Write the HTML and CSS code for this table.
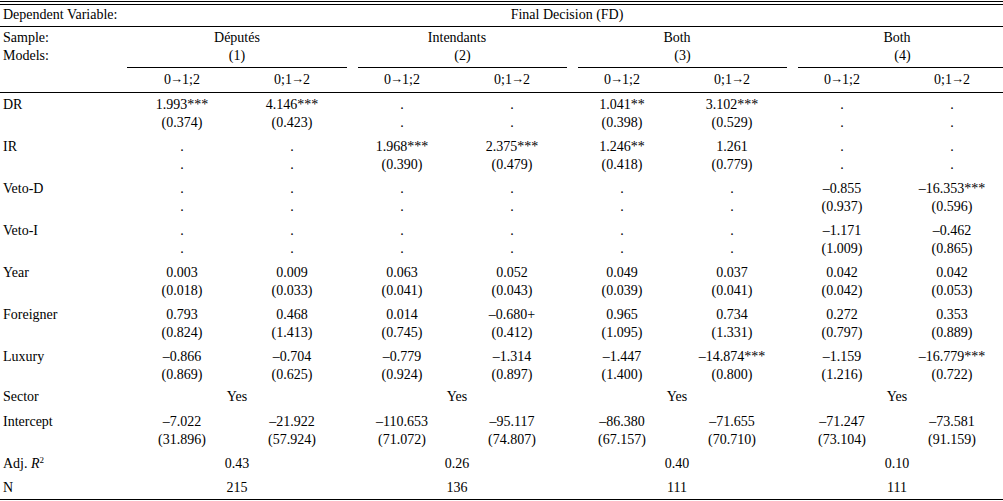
FILE: index.html
```html
<!DOCTYPE html>
<html>
<head>
<meta charset="utf-8">
<link rel="stylesheet" href="styles.css">
</head>
<body>
<div class="wrap">
<table class="reg">
<colgroup>
<col class="c-label"><col class="c"><col class="c"><col class="c"><col class="c"><col class="c"><col class="c"><col class="c"><col class="c">
</colgroup>
<tbody>
<tr class="r-dep">
<td class="lab">Dependent Variable:</td>
<td colspan="8">Final Decision (FD)</td>
</tr>
<tr class="r-sample">
<td class="lab">Sample:</td>
<td colspan="2">Députés</td>
<td colspan="2">Intendants</td>
<td colspan="2">Both</td>
<td colspan="2">Both</td>
</tr>
<tr class="r-models">
<td class="lab">Models:</td>
<td colspan="2"><div class="cmid first">(1)</div></td>
<td colspan="2"><div class="cmid">(2)</div></td>
<td colspan="2"><div class="cmid">(3)</div></td>
<td colspan="2"><div class="cmid">(4)</div></td>
</tr>
<tr class="r-arrows">
<td class="lab"></td>
<td>0<span class="arr">→</span>1;2</td><td>0;1<span class="arr">→</span>2</td>
<td>0<span class="arr">→</span>1;2</td><td>0;1<span class="arr">→</span>2</td>
<td>0<span class="arr">→</span>1;2</td><td>0;1<span class="arr">→</span>2</td>
<td>0<span class="arr">→</span>1;2</td><td>0;1<span class="arr">→</span>2</td>
</tr>
<tr class="r-coef">
<td class="lab">DR</td>
<td>1.993***<br>(0.374)</td><td>4.146***<br>(0.423)</td>
<td>.<br>.</td><td>.<br>.</td>
<td>1.041**<br>(0.398)</td><td>3.102***<br>(0.529)</td>
<td>.<br>.</td><td>.<br>.</td>
</tr>
<tr class="r-coef">
<td class="lab">IR</td>
<td>.<br>.</td><td>.<br>.</td>
<td>1.968***<br>(0.390)</td><td>2.375***<br>(0.479)</td>
<td>1.246**<br>(0.418)</td><td>1.261<br>(0.779)</td>
<td>.<br>.</td><td>.<br>.</td>
</tr>
<tr class="r-coef">
<td class="lab">Veto-D</td>
<td>.<br>.</td><td>.<br>.</td>
<td>.<br>.</td><td>.<br>.</td>
<td>.<br>.</td><td>.<br>.</td>
<td>–0.855<br>(0.937)</td><td>–16.353***<br>(0.596)</td>
</tr>
<tr class="r-coef">
<td class="lab">Veto-I</td>
<td>.<br>.</td><td>.<br>.</td>
<td>.<br>.</td><td>.<br>.</td>
<td>.<br>.</td><td>.<br>.</td>
<td>–1.171<br>(1.009)</td><td>–0.462<br>(0.865)</td>
</tr>
<tr class="r-coef">
<td class="lab">Year</td>
<td>0.003<br>(0.018)</td><td>0.009<br>(0.033)</td>
<td>0.063<br>(0.041)</td><td>0.052<br>(0.043)</td>
<td>0.049<br>(0.039)</td><td>0.037<br>(0.041)</td>
<td>0.042<br>(0.042)</td><td>0.042<br>(0.053)</td>
</tr>
<tr class="r-coef">
<td class="lab">Foreigner</td>
<td>0.793<br>(0.824)</td><td>0.468<br>(1.413)</td>
<td>0.014<br>(0.745)</td><td>–0.680+<br>(0.412)</td>
<td>0.965<br>(1.095)</td><td>0.734<br>(1.331)</td>
<td>0.272<br>(0.797)</td><td>0.353<br>(0.889)</td>
</tr>
<tr class="r-coef">
<td class="lab">Luxury</td>
<td>–0.866<br>(0.869)</td><td>–0.704<br>(0.625)</td>
<td>–0.779<br>(0.924)</td><td>–1.314<br>(0.897)</td>
<td>–1.447<br>(1.400)</td><td>–14.874***<br>(0.800)</td>
<td>–1.159<br>(1.216)</td><td>–16.779***<br>(0.722)</td>
</tr>
<tr class="r-sector">
<td class="lab">Sector</td>
<td colspan="2">Yes</td><td colspan="2">Yes</td><td colspan="2">Yes</td><td colspan="2">Yes</td>
</tr>
<tr class="r-coef r-int">
<td class="lab">Intercept</td>
<td>–7.022<br>(31.896)</td><td>–21.922<br>(57.924)</td>
<td>–110.653<br>(71.072)</td><td>–95.117<br>(74.807)</td>
<td>–86.380<br>(67.157)</td><td>–71.655<br>(70.710)</td>
<td>–71.247<br>(73.104)</td><td>–73.581<br>(91.159)</td>
</tr>
<tr class="r-stat">
<td class="lab">Adj. <i>R</i><sup>2</sup></td>
<td colspan="2">0.43</td><td colspan="2">0.26</td><td colspan="2">0.40</td><td colspan="2">0.10</td>
</tr>
<tr class="r-stat r-last">
<td class="lab">N</td>
<td colspan="2">215</td><td colspan="2">136</td><td colspan="2">111</td><td colspan="2">111</td>
</tr>
</tbody>
</table>
</div>
</body>
</html>
```

FILE: styles.css
```css
html, body {
  margin: 0;
  padding: 0;
  background: #fff;
}
body {
  font-family: "Liberation Serif", "Times New Roman", serif;
  font-size: 14px;
  line-height: 18px;
  color: #000;
  width: 1003px;
  height: 501px;
  overflow: hidden;
}
.wrap {
  width: 1003px;
  overflow: hidden;
  margin-top: 1px;
  border-top: 1px solid #000;
  padding-top: 2px;
}
.reg {
  width: 1007px;
  table-layout: fixed;
  border-collapse: collapse;
  border-spacing: 0;
  border-top: 1px solid #000;
}
.c-label { width: 127px; }
.c { width: 110px; }
.reg td {
  padding: 0;
  text-align: center;
  vertical-align: top;
  white-space: nowrap;
}
.reg td.lab {
  text-align: left;
  padding-left: 3px;
}
.r-dep td {
  padding-top: 1px;
  padding-bottom: 2px;
  border-bottom: 1px solid #000;
}
.r-sample td {
  padding-top: 2px;
}
.r-models td {
  padding-bottom: 0;
}
.cmid {
  margin-left: 11px;
  padding-bottom: 2px;
  border-bottom: 1px solid #000;
}
.cmid.first {
  margin-left: 0;
}
.r-arrows td {
  padding-top: 3px;
  padding-bottom: 3px;
  border-bottom: 1px solid #000;
}
.arr {
  display: inline-block;
  margin: 0 -1px;
  font-size: 13px;
  line-height: 18px;
  vertical-align: top;
  position: relative;
  top: -1px;
}
.r-coef td {
  padding-top: 3px;
  padding-bottom: 3px;
}
.r-sector td {
  padding-top: 1px;
  padding-bottom: 3px;
}
.r-int td {
  padding-top: 4px;
}
.r-stat td {
  padding-top: 3px;
  padding-bottom: 3px;
}
.r-last td {
  padding-bottom: 2px;
  border-bottom: 1px solid #000;
}
sup {
  font-size: 9px;
  line-height: 0;
  vertical-align: 5px;
}
```
